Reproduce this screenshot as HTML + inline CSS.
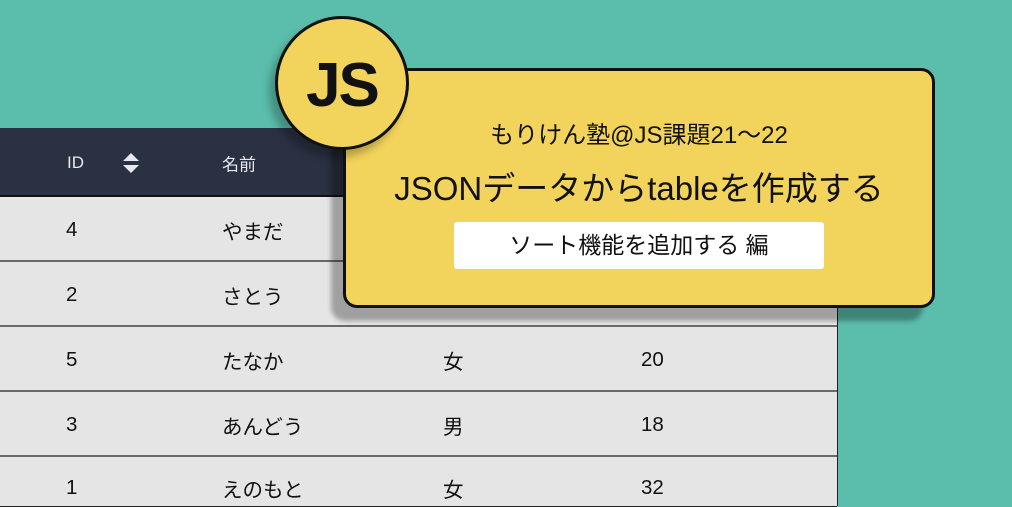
<!DOCTYPE html>
<html><head><meta charset="utf-8"><style>
*{margin:0;padding:0;box-sizing:border-box}
body{width:1012px;height:506px;overflow:hidden;background:#5bbdab;position:relative;font-family:"Liberation Sans","Noto Sans CJK JP",sans-serif;color:#111}
.tbl{position:absolute;left:0;top:128px;width:838px;height:378px;border-right:1px solid #222;background:#e5e5e5}
.hd{position:absolute;left:0;top:0;width:837px;height:68px;background:#2a3142;color:#e8e8ee;font-size:17px}
.row{position:absolute;left:0;width:837px;height:65px;border-top:2px solid #6a6a6a;font-size:20.5px}
.c{position:absolute;top:52%;transform:translateY(-50%)}
.card{position:absolute;left:343px;top:68px;width:592px;height:240px;background:#f2d35b;border:3px solid #111;border-radius:14px;box-shadow:-12px 13px 5px rgba(0,0,0,.3);text-align:center}
.circ{position:absolute;left:275px;top:16px;width:134px;height:134px;border-radius:50%;background:#f2d35b;border:3px solid #111;box-shadow:-6px 8px 8px rgba(0,0,0,.25);font-weight:bold;font-size:62px;line-height:134px;text-align:center;letter-spacing:-2px;color:#111}
</style></head><body>
<div class="tbl">
 <div class="hd">
  <span class="c" style="left:67px">ID</span>
  <svg class="c" style="left:122px" width="18" height="22" viewBox="0 0 18 22"><path d="M9 1L17 9H1Z M9 21L17 13H1Z" fill="#e8e8ee"/></svg>
  <span class="c" style="left:222px">名前</span>
 </div>
 <div class="row" style="top:67px;border-top:2px solid #111"><span class="c" style="left:66px">4</span><span class="c" style="left:222px">やまだ</span></div>
 <div class="row" style="top:132px"><span class="c" style="left:66px">2</span><span class="c" style="left:222px">さとう</span><span class="c" style="left:443px">男</span></div>
 <div class="row" style="top:197px"><span class="c" style="left:66px">5</span><span class="c" style="left:222px">たなか</span><span class="c" style="left:443px">女</span><span class="c" style="left:641px">20</span></div>
 <div class="row" style="top:262px"><span class="c" style="left:66px">3</span><span class="c" style="left:222px">あんどう</span><span class="c" style="left:443px">男</span><span class="c" style="left:641px">18</span></div>
 <div class="row" style="top:327px;height:52px;border-bottom:1px solid #222"><span class="c" style="left:66px;top:64%">1</span><span class="c" style="left:222px;top:64%">えのもと</span><span class="c" style="left:443px;top:64%">女</span><span class="c" style="left:641px;top:64%">32</span></div>
</div>
<div class="card">
 <div style="position:absolute;left:0;right:0;top:44px;font-size:24px">もりけん塾@JS課題21〜22</div>
 <div style="position:absolute;left:0;right:0;top:91px;font-size:33px">JSONデータからtableを作成する</div>
 <div style="position:absolute;left:108px;top:151px;width:370px;height:47px;background:#fff;border-radius:3px;font-size:23px;line-height:47px">ソート機能を追加する 編</div>
</div>
<div class="circ">JS</div>
</body></html>
